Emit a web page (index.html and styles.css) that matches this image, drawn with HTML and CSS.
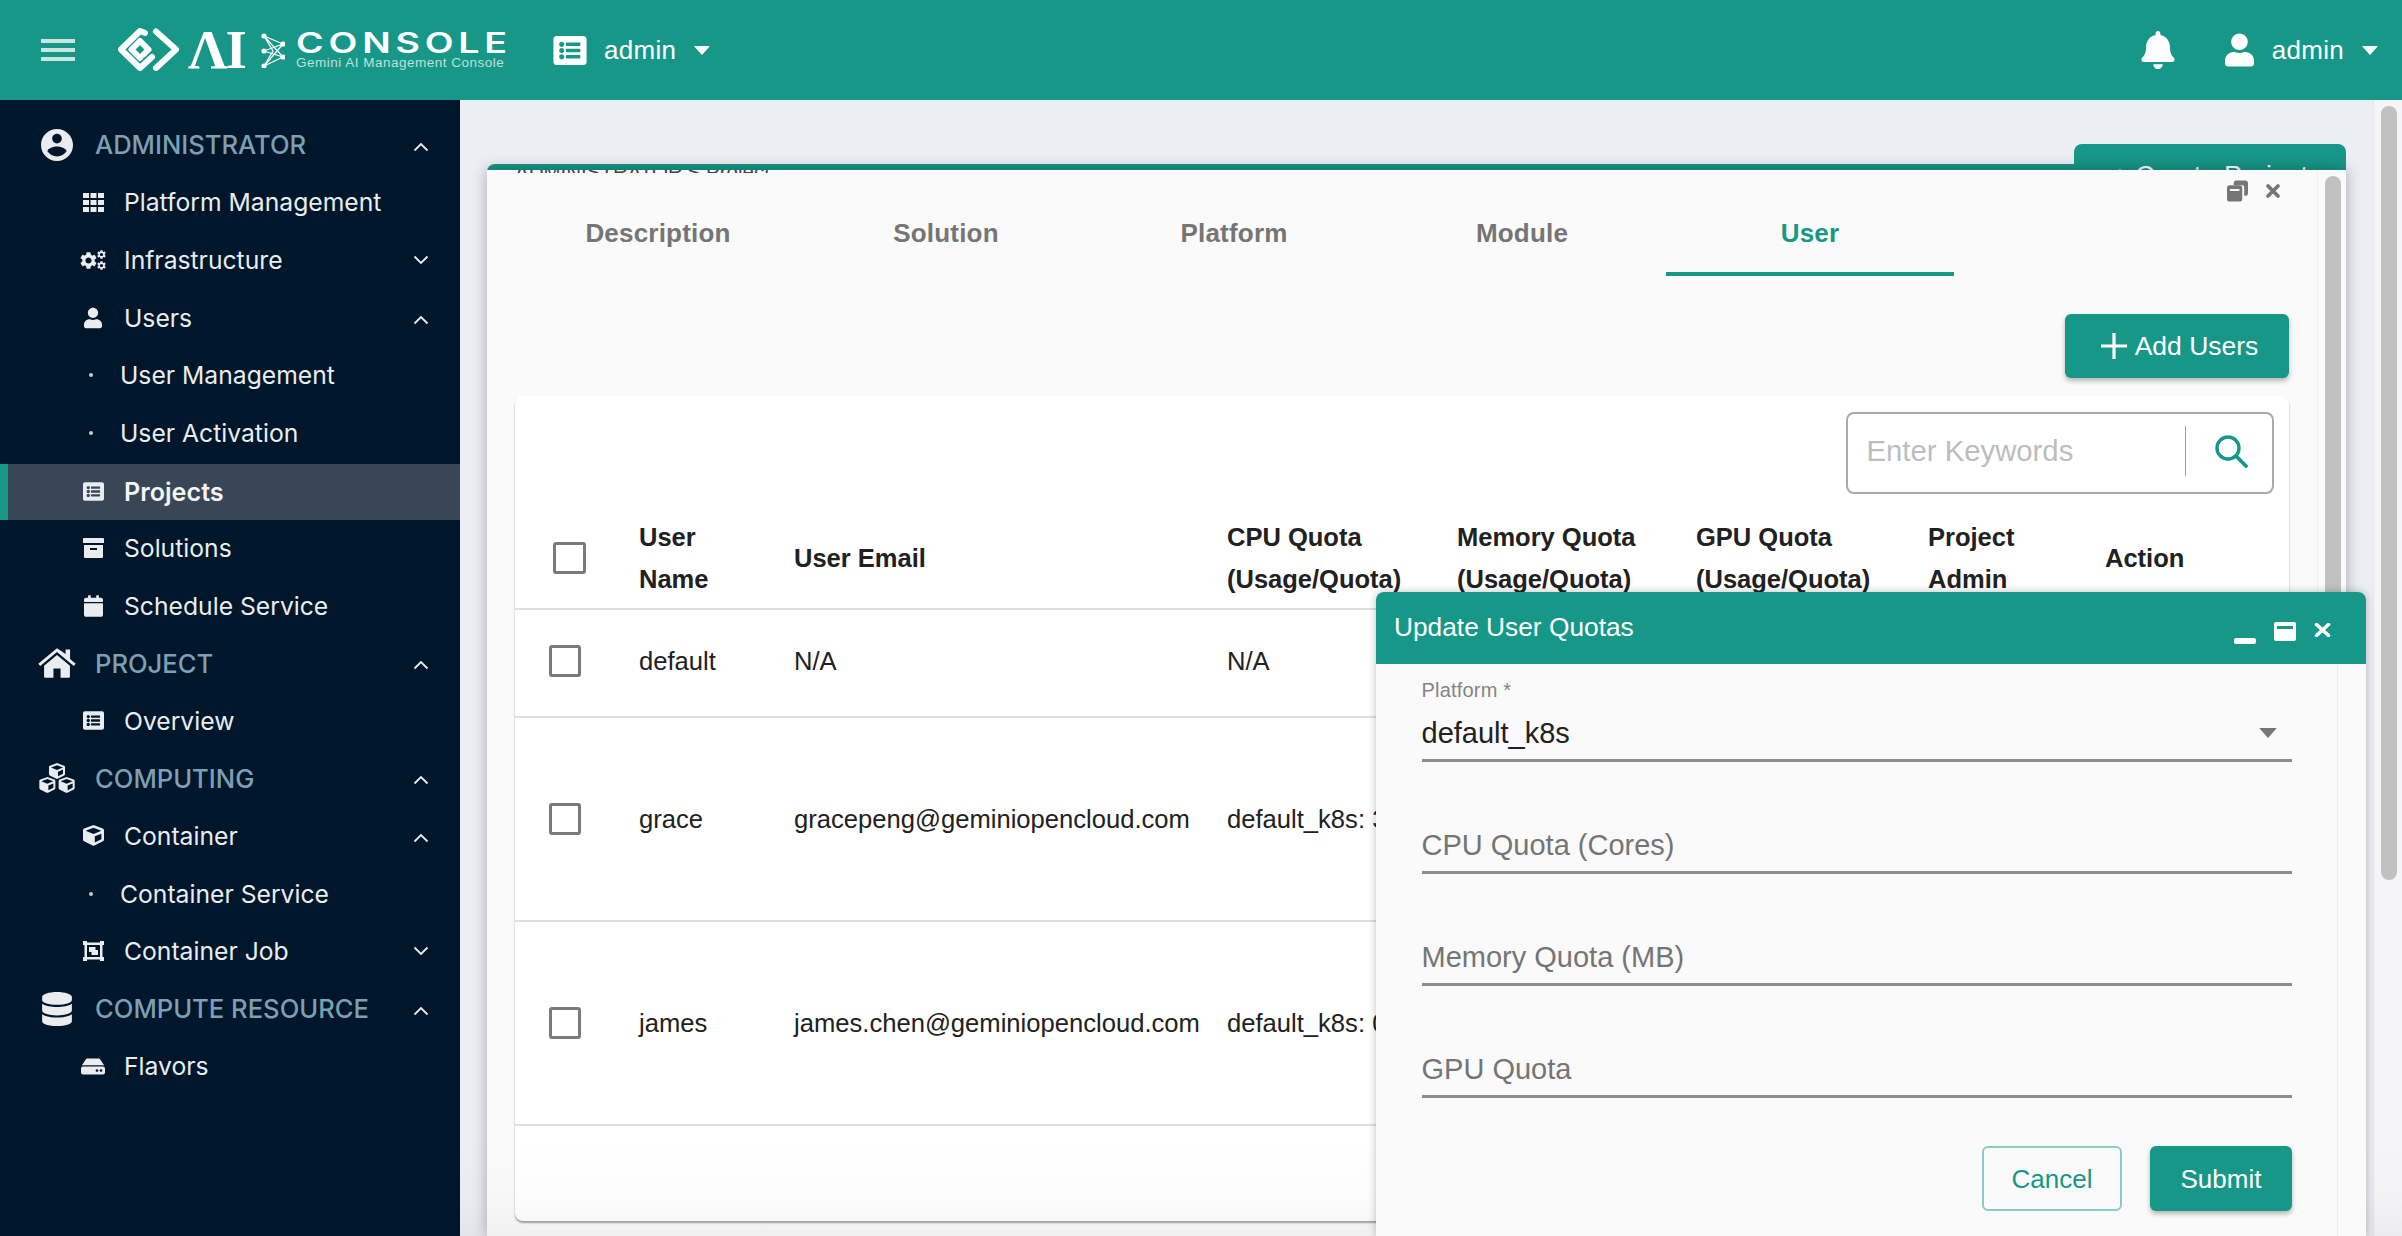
FILE: index.html
```html
<!DOCTYPE html>
<html lang="en">
<head>
<meta charset="utf-8">
<title>AI Console - Project Users</title>
<link rel="stylesheet" href="styles.css">
</head>
<body>
<svg class="defs" aria-hidden="true">
  <symbol id="i-list" viewBox="0 32 512 448"><path d="M464 480H48c-26.51 0-48-21.49-48-48V80c0-26.51 21.49-48 48-48h416c26.51 0 48 21.49 48 48v352c0 26.51-21.49 48-48 48zM128 120c-22.091 0-40 17.909-40 40s17.909 40 40 40 40-17.909 40-40-17.909-40-40-40zm0 96c-22.091 0-40 17.909-40 40s17.909 40 40 40 40-17.909 40-40-17.909-40-40-40zm0 96c-22.091 0-40 17.909-40 40s17.909 40 40 40 40-17.909 40-40-17.909-40-40-40zm288-136v-32c0-6.627-5.373-12-12-12H204c-6.627 0-12 5.373-12 12v32c0 6.627 5.373 12 12 12h200c6.627 0 12-5.373 12-12zm0 96v-32c0-6.627-5.373-12-12-12H204c-6.627 0-12 5.373-12 12v32c0 6.627 5.373 12 12 12h200c6.627 0 12-5.373 12-12zm0 96v-32c0-6.627-5.373-12-12-12H204c-6.627 0-12 5.373-12 12v32c0 6.627 5.373 12 12 12h200c6.627 0 12-5.373 12-12z"/></symbol>
  <symbol id="i-user" viewBox="0 0 448 512"><path d="M224 256c70.7 0 128-57.3 128-128S294.7 0 224 0 96 57.3 96 128s57.3 128 128 128zm89.6 32h-16.7c-22.2 10.2-46.9 16-72.9 16s-50.6-5.8-72.9-16h-16.7C60.2 288 0 348.2 0 422.4V464c0 26.5 21.5 48 48 48h352c26.5 0 48-21.5 48-48v-41.6c0-74.2-60.2-134.4-134.4-134.4z"/></symbol>
  <symbol id="i-bell" viewBox="0 0 448 512"><path d="M224 512c35.32 0 63.97-28.65 63.97-64H160.03c0 35.35 28.65 64 63.97 64zm215.39-149.71c-19.32-20.76-55.47-51.99-55.47-154.29 0-77.7-54.48-139.9-127.94-155.16V32c0-17.67-14.32-32-31.98-32s-31.98 14.33-31.98 32v20.84C118.56 68.1 64.08 130.3 64.08 208c0 102.3-36.15 133.53-55.47 154.29-6 6.45-8.66 14.16-8.61 21.71.11 16.4 12.98 32 32.1 32h383.8c19.12 0 32-15.6 32.1-32 .05-7.55-2.61-15.27-8.61-21.71z"/></symbol>
  <symbol id="i-account" viewBox="2 2 20 20"><path d="M12 2C6.48 2 2 6.48 2 12s4.48 10 10 10 10-4.48 10-10S17.52 2 12 2zm0 3c1.66 0 3 1.34 3 3s-1.34 3-3 3-3-1.34-3-3 1.34-3 3-3zm0 14.2c-2.5 0-4.71-1.28-6-3.22.03-1.99 4-3.08 6-3.08 1.99 0 5.97 1.09 6 3.08-1.29 1.94-3.5 3.22-6 3.22z"/></symbol>
  <symbol id="i-gear" viewBox="2 2 20 20"><path d="M19.14 12.94c.04-.3.06-.61.06-.94 0-.32-.02-.64-.07-.94l2.03-1.58c.18-.14.23-.41.12-.61l-1.92-3.32c-.12-.22-.37-.29-.59-.22l-2.39.96c-.5-.38-1.03-.7-1.62-.94l-.36-2.54c-.04-.24-.24-.41-.48-.41h-3.84c-.24 0-.43.17-.47.41l-.36 2.54c-.59.24-1.13.57-1.62.94l-2.39-.96c-.22-.08-.47 0-.59.22L2.74 8.87c-.12.21-.08.47.12.61l2.03 1.58c-.05.3-.09.63-.09.94s.02.64.07.94l-2.03 1.58c-.18.14-.23.41-.12.61l1.92 3.32c.12.22.37.29.59.22l2.39-.96c.5.38 1.03.7 1.62.94l.36 2.54c.05.24.24.41.48.41h3.84c.24 0 .44-.17.47-.41l.36-2.54c.59-.24 1.13-.56 1.62-.94l2.39.96c.22.08.47 0 .59-.22l1.92-3.32c.12-.22.07-.47-.12-.61l-2.01-1.58zM12 15.6c-1.98 0-3.6-1.62-3.6-3.6s1.62-3.6 3.6-3.6 3.6 1.62 3.6 3.6-1.62 3.6-3.6 3.6z"/></symbol>
  <symbol id="i-cube" viewBox="0 0 512 512"><path d="M239.1 6.3l-208 78c-18.7 7-31.1 25-31.1 45v225.1c0 18.2 10.3 34.8 26.5 42.9l208 104c13.5 6.8 29.4 6.8 42.9 0l208-104c16.3-8.1 26.5-24.8 26.5-42.9V129.3c0-20-12.4-37.9-31.1-44.9l-208-78C262 2.2 250 2.2 239.1 6.3zM256 68.4l192 72v1.1l-192 78-192-78v-1.1l192-72zm32 356V275.5l160-65v133.9l-160 80z"/></symbol>
  <symbol id="i-up" viewBox="0 0 16 10"><path d="M1.5 8.5 8 2l6.5 6.5" fill="none" stroke="currentColor" stroke-width="1.8"/></symbol>
  <symbol id="i-down" viewBox="0 0 16 10"><path d="M1.5 1.5 8 8l6.5-6.5" fill="none" stroke="currentColor" stroke-width="1.8"/></symbol>
  <symbol id="i-caret" viewBox="0 0 14 8"><path d="M0 .5Q0 0 .5 0h13q.5 0 .2.5L7 8 .2.500z"/></symbol>
</svg>

<header class="topbar">
  <button class="burger" aria-label="Menu"><span></span><span></span><span></span></button>
  <div class="logo">
    <svg class="logo-mark" viewBox="0 0 61 43" aria-hidden="true"><g fill="none" stroke="#fff" stroke-width="6" stroke-linejoin="round" stroke-linecap="round"><path d="M27 5 22 3 3 21.5 22 40l12-11"/><path d="M22 30 13.500 21.500 22 13l8.500 8.500-5 5"/><path d="M38 3.500 58 21.500 38 40"/></g></svg>
    <span class="logo-ai">ΛI</span>
    <svg class="logo-net" viewBox="0 0 24 35" aria-hidden="true"><g stroke="#fff" stroke-width="1.2" fill="none"><path d="M3 3 22 11M3 3 22 24M3 18 22 11M3 18 22 24M3 33 22 24M3 33 22 11M3 3 12 18 3 33"/></g><g fill="#fff"><circle cx="3" cy="3" r="2.600"/><circle cx="22" cy="11" r="2.600"/><circle cx="3" cy="18" r="2.600"/><circle cx="22" cy="24" r="2.600"/><circle cx="3" cy="33" r="2.600"/></g></svg>
    <div class="logo-words">
      <span class="logo-console">CONSOLE</span>
      <span class="logo-sub">Gemini AI Management Console</span>
    </div>
  </div>
  <div class="tenant">
    <svg class="tenant-icon"><use href="#i-list"/></svg>
    <span class="bar-label">admin</span>
    <svg class="caret"><use href="#i-caret"/></svg>
  </div>
  <div class="bar-right">
    <svg class="bell"><use href="#i-bell"/></svg>
    <svg class="bar-user"><use href="#i-user"/></svg>
    <span class="bar-label">admin</span>
    <svg class="caret"><use href="#i-caret"/></svg>
  </div>
</header>

<div class="layout">
  <nav class="sidebar">
    <a class="row lv1"><svg class="ic ic-account"><use href="#i-account"/></svg><span class="label">ADMINISTRATOR</span><svg class="chev up"><use href="#i-up"/></svg></a>
    <a class="row lv2"><span class="slot"><svg class="ic ic-grid" viewBox="0 0 21 19"><path d="M0 0h6v5H0zM7.500 0h6v5h-6zM15 0h6v5h-6zM0 7h6v5H0zM7.500 7h6v5h-6zM15 7h6v5h-6zM0 14h6v5H0zM7.500 14h6v5h-6zM15 14h6v5h-6z"/></svg></span><span class="label">Platform Management</span></a>
    <a class="row lv2"><span class="slot"><svg class="ic ic-cogs" viewBox="0 0 26 20"><use href="#i-gear" x="0" y="2" width="17" height="17"/><use href="#i-gear" x="17" y="0" width="9" height="9"/><use href="#i-gear" x="17" y="11" width="9" height="9"/></svg></span><span class="label">Infrastructure</span><svg class="chev"><use href="#i-down"/></svg></a>
    <a class="row lv2"><span class="slot"><svg class="ic ic-person"><use href="#i-user"/></svg></span><span class="label">Users</span><svg class="chev up"><use href="#i-up"/></svg></a>
    <a class="row lv3"><i class="dot"></i><span class="label">User Management</span></a>
    <a class="row lv3"><i class="dot"></i><span class="label">User Activation</span></a>
    <a class="row lv2 active"><span class="slot"><svg class="ic ic-list"><use href="#i-list"/></svg></span><span class="label">Projects</span></a>
    <a class="row lv2"><span class="slot"><svg class="ic ic-archive" viewBox="0 0 21 20"><path d="M0 1q0-1 1-1h19q1 0 1 1v4H0zM1 7h19v12q0 1-1 1H2q-1 0-1-1zm6 3v2h7v-2z" fill-rule="evenodd"/></svg></span><span class="label">Solutions</span></a>
    <a class="row lv2"><span class="slot"><svg class="ic ic-cal" viewBox="0 0 448 512"><path d="M12 192h424c6.600 0 12 5.400 12 12v260c0 26.500-21.500 48-48 48H48c-26.500 0-48-21.500-48-48V204c0-6.600 5.400-12 12-12zm436-44v-36c0-26.500-21.500-48-48-48h-48V12c0-6.600-5.400-12-12-12h-40c-6.600 0-12 5.400-12 12v52H160V12c0-6.600-5.400-12-12-12h-40c-6.600 0-12 5.400-12 12v52H48C21.500 64 0 85.500 0 112v36c0 6.600 5.400 12 12 12h424c6.600 0 12-5.400 12-12z"/></svg></span><span class="label">Schedule Service</span></a>
    <a class="row lv1"><svg class="ic ic-home" viewBox="0 0 576 450"><path d="M288 0 4 238l30 34L288 60l254 212 30-34-86-72V22h-68v68zM92 268v162q0 20 20 20h122V310h108v140h122q20 0 20-20V268L288 104z"/></svg><span class="label">PROJECT</span><svg class="chev up"><use href="#i-up"/></svg></a>
    <a class="row lv2"><span class="slot"><svg class="ic ic-list"><use href="#i-list"/></svg></span><span class="label">Overview</span></a>
    <a class="row lv1"><svg class="ic ic-cubes" viewBox="0 0 34 28"><use href="#i-cube" x="9" y="0" width="16" height="15"/><use href="#i-cube" x="0" y="13" width="16" height="15"/><use href="#i-cube" x="18" y="13" width="16" height="15"/></svg><span class="label">COMPUTING</span><svg class="chev up"><use href="#i-up"/></svg></a>
    <a class="row lv2"><span class="slot"><svg class="ic ic-cube"><use href="#i-cube"/></svg></span><span class="label">Container</span><svg class="chev up"><use href="#i-up"/></svg></a>
    <a class="row lv3"><i class="dot"></i><span class="label">Container Service</span></a>
    <a class="row lv2"><span class="slot"><svg class="ic ic-job" viewBox="0 0 21 20"><path fill-rule="evenodd" d="M0 0h4v1.500h13V0h4v4h-1.500v12H21v4h-4v-1.500H4V20H0v-4h1.500V4H0zM4 4v12h13V4zM6 6h6.500v3H15v5H8.500v-3H6z"/></svg></span><span class="label">Container Job</span><svg class="chev"><use href="#i-down"/></svg></a>
    <a class="row lv1"><svg class="ic ic-db" viewBox="0 0 448 512"><path d="M448 73.143v45.714C448 159.143 347.667 192 224 192S0 159.143 0 118.857V73.143C0 32.857 100.333 0 224 0s224 32.857 224 73.143zM448 176v102.857C448 319.143 347.667 352 224 352S0 319.143 0 278.857V176c48.125 33.143 136.208 48.572 224 48.572S399.874 209.143 448 176zm0 160v102.857C448 479.143 347.667 512 224 512S0 479.143 0 438.857V336c48.125 33.143 136.208 48.572 224 48.572S399.874 369.143 448 336z"/></svg><span class="label">COMPUTE RESOURCE</span><svg class="chev up"><use href="#i-up"/></svg></a>
    <a class="row lv2"><span class="slot"><svg class="ic ic-hdd" viewBox="0 64 576 384"><path d="M576 304v96c0 26.510-21.490 48-48 48H48c-26.510 0-48-21.490-48-48v-96c0-26.510 21.490-48 48-48h480c26.510 0 48 21.490 48 48zm-48-80a79.557 79.557 0 0 1 30.777 6.165L462.250 85.374A48.003 48.003 0 0 0 422.311 64H153.689a48 48 0 0 0-39.938 21.374L17.223 230.165A79.557 79.557 0 0 1 48 224h480zm-48 96c-17.673 0-32 14.327-32 32s14.327 32 32 32 32-14.327 32-32-14.327-32-32-32zm-96 0c-17.673 0-32 14.327-32 32s14.327 32 32 32 32-14.327 32-32-14.327-32-32-32z"/></svg></span><span class="label">Flavors</span></a>
  </nav>

  <main class="content">
    <div class="stage">
      <div class="page-head"><button class="create-btn">+ Create Project</button></div>
      <div class="page-card"></div>
    </div>
    <div class="gutter"><div class="thumb main-thumb"></div></div>

    <section class="modal">
      <div class="modal-body">
        <div class="peek">ADMINISTRATOR'S Project</div>
        <div class="win-ctl">
          <svg class="ctl-restore" viewBox="0 0 22 22"><path d="M7 3q0-3 3-3h9q3 0 3 3v10q0 3-3 3h-1V7q0-2-2-2H7z"/><path fill-rule="evenodd" d="M0 8q0-3 3-3h10q3 0 3 3v11q0 3-3 3H3q-3 0-3-3zm3 1v2h10V9z"/></svg>
          <svg class="ctl-x" viewBox="0 0 14 14"><path d="M2 2l10 10M12 2 2 12" stroke="#757575" stroke-width="3.600" fill="none" stroke-linecap="round"/></svg>
        </div>
        <div class="tabs">
          <div class="tab">Description</div>
          <div class="tab">Solution</div>
          <div class="tab">Platform</div>
          <div class="tab">Module</div>
          <div class="tab tab-on">User</div>
        </div>
        <div class="toolbar">
          <button class="add-btn"><svg class="plus" viewBox="0 0 26 26"><path d="M13 0v26M0 13h26" stroke="#fff" stroke-width="3.200"/></svg>Add Users</button>
        </div>
        <div class="card">
          <div class="search-row">
            <div class="search">
              <span class="search-ph">Enter Keywords</span>
              <i class="search-sep"></i>
              <svg class="search-ic" viewBox="0 0 33 33"><circle cx="13" cy="13" r="11" fill="none" stroke="#179788" stroke-width="3.400"/><path d="M21 21l10 10" stroke="#179788" stroke-width="3.800" stroke-linecap="round"/></svg>
            </div>
          </div>
          <table class="users">
            <colgroup><col class="c-check"><col class="c-name"><col class="c-mail"><col class="c-cpu"><col class="c-mem"><col class="c-gpu"><col class="c-admin"><col class="c-act"></colgroup>
            <thead>
              <tr>
                <th><i class="box box-head"></i></th>
                <th>User<br>Name</th>
                <th>User Email</th>
                <th>CPU Quota<br>(Usage/Quota)</th>
                <th>Memory Quota<br>(Usage/Quota)</th>
                <th>GPU Quota<br>(Usage/Quota)</th>
                <th>Project<br>Admin</th>
                <th>Action</th>
              </tr>
            </thead>
            <tbody>
              <tr class="r-short">
                <td><i class="box"></i></td><td>default</td><td>N/A</td><td>N/A</td><td>N/A</td><td>N/A</td><td></td><td></td>
              </tr>
              <tr class="r-tall">
                <td><i class="box"></i></td><td>grace</td><td>gracepeng@geminiopencloud.com</td><td>default_k8s: 3/10</td><td></td><td></td><td></td><td></td>
              </tr>
              <tr class="r-tall">
                <td><i class="box"></i></td><td>james</td><td>james.chen@geminiopencloud.com</td><td>default_k8s: 0/10</td><td></td><td></td><td></td><td></td>
              </tr>
            </tbody>
          </table>
        </div>
      </div>
      <div class="modal-track"><div class="thumb modal-thumb"></div></div>
    </section>

    <div class="shade"></div>

    <section class="dialog">
      <header class="dialog-head">
        <span class="dialog-title">Update User Quotas</span>
        <svg class="d-min" viewBox="0 0 22 6"><rect width="22" height="6" rx="2" fill="#fff"/></svg>
        <svg class="d-max" viewBox="0 0 22 19"><path fill="#fff" fill-rule="evenodd" d="M2 0h18q2 0 2 2v15q0 2-2 2H2q-2 0-2-2V2q0-2 2-2zm1 4v3h16V4z"/></svg>
        <svg class="d-x" viewBox="0 0 17 14"><path d="M2.500 1.500l12 11M14.500 1.500l-12 11" stroke="#fff" stroke-width="3.600" stroke-linecap="round"/></svg>
      </header>
      <div class="dialog-body">
        <div class="form">
          <div class="field field-select">
            <label class="field-label">Platform *</label>
            <div class="field-value"><span>default_k8s</span><svg class="select-caret" viewBox="0 0 14 8"><path d="M0 0h14L7 8z"/></svg></div>
          </div>
          <div class="field"><span class="ph">CPU Quota (Cores)</span></div>
          <div class="field"><span class="ph">Memory Quota (MB)</span></div>
          <div class="field"><span class="ph">GPU Quota</span></div>
          <div class="actions">
            <button class="btn-cancel">Cancel</button>
            <button class="btn-submit">Submit</button>
          </div>
        </div>
        <div class="dialog-track"></div>
      </div>
    </section>
  </main>
</div>
</body>
</html>
```
FILE: styles.css
```css
* { box-sizing: border-box; }
html, body { margin: 0; height: 1236px; overflow: hidden; }
body { font-family: "Liberation Sans", Arial, sans-serif; font-size: 26px; color: #212121; background: #eceef3; display: flex; flex-direction: column; }
.defs { position: absolute; width: 0; height: 0; }
button { font-family: inherit; border: 0; padding: 0; background: none; }

/* top bar */
.topbar { height: 100px; flex: none; background: #179788; display: flex; align-items: center; color: #fff; }
.burger { width: 34px; margin-left: 41px; display: flex; flex-direction: column; gap: 5px; }
.burger span { height: 4px; background: #c9e6e2; display: block; }
.logo { margin-left: 43px; display: flex; align-items: center; height: 100px; }
.logo-mark { width: 61px; height: 43px; margin-top: -1px; }
.logo-ai { font-family: "Liberation Serif", serif; font-weight: 700; font-size: 55px; line-height: 40px; width: 60px; margin-left: 9px; letter-spacing: -2px; white-space: nowrap; }
.logo-net { width: 24px; height: 35px; margin-left: 13px; }
.logo-words { margin-left: 11px; width: 212px; display: flex; flex-direction: column; align-items: flex-start; white-space: nowrap; }
.logo-console { font-family: Inter, sans-serif; font-weight: 600; font-size: 28px; line-height: 24px; letter-spacing: 3.6px; transform: scaleX(1.34); transform-origin: left center; }
.logo-sub { font-size: 13.5px; line-height: 15px; letter-spacing: .5px; color: rgba(255,255,255,.72); }
.tenant { margin-left: 45px; display: flex; align-items: center; }
.tenant-icon { width: 34px; height: 29px; fill: #fff; margin-right: 17px; }
.bar-label { font-size: 26px; letter-spacing: .3px; }
.caret { width: 16px; height: 9px; fill: #fff; margin-left: 18px; }
.bar-right { margin-left: auto; margin-right: 24px; display: flex; align-items: center; }
.bell { width: 34px; height: 38px; fill: #fff; margin-right: 50px; }
.bar-user { width: 29px; height: 34px; fill: #fff; margin-right: 18px; }

/* sidebar */
.layout { flex: 1; display: flex; min-height: 0; }
.sidebar { width: 460px; flex: none; background: #00162b; padding-top: 16px; }
.row { height: 57.6px; display: flex; align-items: center; color: #e9edf0; font-family: Inter, sans-serif; font-size: 24.7px; white-space: nowrap; }
.ic { fill: #e9edf0; display: block; }
.chev { width: 16px; height: 10px; margin-left: auto; margin-right: 31px; color: #e9edf0; }
.chev.up { margin-top: 4px; }
.lv1 { padding-left: 38px; }
.lv1 .ic { width: 38px; height: 30px; margin-right: 19px; }
.lv1 .label { color: #7d9fb2; font-weight: 500; font-size: 25.6px; }
.lv1 .ic-account { width: 34px; height: 32px; margin: 0 21px 0 2px; }
.lv1 .ic-db { width: 30px; height: 34px; margin: 0 23px 0 4px; }
.lv2 { padding-left: 78px; }
.slot { width: 30px; margin-right: 16px; display: flex; justify-content: center; }
.ic-grid { width: 21px; height: 19px; }
.ic-cogs { width: 26px; height: 20px; }
.ic-person { width: 18px; height: 22px; }
.ic-list { width: 21px; height: 19px; }
.ic-archive { width: 21px; height: 20px; }
.ic-cal { width: 19px; height: 22px; }
.ic-cube { width: 21px; height: 21px; }
.ic-job { width: 21px; height: 20px; }
.ic-hdd { width: 24px; height: 17px; }
.lv3 { padding-left: 89px; }
.dot { width: 4px; height: 4px; border-radius: 50%; background: #c3ccd3; margin-right: 27px; }
.active { background: #384655; border-left: 8px solid #179788; padding-left: 70px; height: 56px; margin: 2.2px 0 -.6px; color: #f3f5f6; }
.active .label { font-weight: 600; font-size: 25.2px; }

/* page behind the window */
.content { flex: 1; position: relative; display: flex; min-width: 0; overflow: hidden; }
.stage { flex: 1; padding: 0 27px; min-width: 0; }
.page-head { height: 64px; display: flex; justify-content: flex-end; }
.create-btn { margin-top: 44px; width: 272px; height: 60px; background: #179788; color: #fff; border-radius: 8px; font-size: 27px; line-height: 30px; padding-top: 17px; display: flex; justify-content: center; align-items: flex-start; align-self: flex-start; position: relative; z-index: 1; }
.page-card { height: 40px; background: #179788; border-radius: 8px 8px 0 0; }
.gutter { width: 29px; flex: none; background: #f5f5f7; padding: 6px 6px 0 7px; border-left: 1px solid #e4e6ea; }
.thumb { background: #c1c1c1; border-radius: 8px; width: 16px; }
.main-thumb { height: 774px; }

/* project window */
.modal { position: absolute; left: 27px; top: 70px; width: 1859px; bottom: 0; background: #fafafa; box-shadow: 0 0 14px rgba(0,0,0,.3); display: flex; z-index: 2; }
.modal-body { flex: 1; min-width: 0; padding: 0 28.5px 0 28px; }
.modal-track { width: 29px; flex: none; padding: 6px 0 0 7px; border-left: 1px solid #efefef; }
.modal-thumb { height: 500px; }
.peek { height: 3px; line-height: 3px; overflow: hidden; font-size: 20.5px; color: #444; white-space: nowrap; }
.win-ctl { height: 30px; display: flex; align-items: flex-start; justify-content: flex-end; gap: 18px; padding: 7px 9px 0 0; }
.ctl-restore { width: 21px; height: 22px; fill: #757575; }
.ctl-x { width: 14px; height: 14px; margin-top: 4px; }
.tabs { display: flex; margin-left: -1px; }
.tab { width: 288px; text-align: center; font-weight: 700; font-size: 26px; letter-spacing: .2px; line-height: 32px; color: #757575; padding: 14px 0 23px; border-bottom: 4px solid transparent; }
.tab-on { color: #179788; border-bottom-color: #179788; }
.toolbar { display: flex; justify-content: flex-end; margin-top: 38px; }
.add-btn { width: 224px; height: 64px; background: #179788; color: #fff; border-radius: 6px; font-size: 26.5px; display: flex; align-items: center; justify-content: center; gap: 8px; padding-left: 6px; box-shadow: 0 3px 5px rgba(0,0,0,.28); }
.plus { width: 26px; height: 26px; }
.card { margin-top: 18px; height: 825px; background: #fff; border-radius: 8px; box-shadow: 0 2px 2px rgba(0,0,0,.35); }
.search-row { height: 112px; padding: 16px 15px 0 0; display: flex; justify-content: flex-end; align-items: flex-start; }
.search { width: 428px; height: 82px; border: 2px solid #aaa; border-radius: 8px; display: flex; align-items: center; padding: 0 0 4px 19px; }
.search-ph { font-size: 29.3px; color: #bdbdbd; width: 318px; white-space: nowrap; }
.search-sep { width: 1.500px; height: 50px; background: #9e9e9e; }
.search-ic { width: 33px; height: 33px; margin-left: 29px; }

/* table */
.users { width: 100%; table-layout: fixed; border-collapse: collapse; }
.c-check { width: 124px; } .c-name { width: 155px; } .c-mail { width: 433px; } .c-cpu { width: 230px; }
.c-mem { width: 239px; } .c-gpu { width: 232px; } .c-admin { width: 177px; } .c-act { width: 184px; }
.users th { height: 101px; padding: 0; text-align: left; font-size: 25.5px; line-height: 42.5px; font-weight: 700; color: #212121; border-bottom: 2px solid #e0e0e0; vertical-align: middle; white-space: nowrap; }
.users td { padding: 0; font-size: 25.6px; color: #212121; border-bottom: 2px solid #e0e0e0; vertical-align: middle; white-space: nowrap; }
.r-short td { height: 108px; padding-bottom: 4px; }
.r-tall td { height: 204px; }
.box { display: block; width: 32px; height: 32px; border: 3px solid #7a7a7a; border-radius: 3px; margin-left: 34px; }
.box-head { margin-left: 38px; width: 33px; }

/* dim at the bottom of the view */
.shade { position: absolute; left: 0; right: 0; bottom: 0; height: 100px; background: linear-gradient(rgba(0,0,0,0), rgba(0,0,0,.012) 65%, rgba(0,0,0,.04)); pointer-events: none; z-index: 3; }

/* quota dialog */
.dialog { position: absolute; left: 916px; top: 492px; width: 990px; bottom: 0; display: flex; flex-direction: column; background: #fafafa; border-radius: 8px 8px 0 0; box-shadow: 0 0 8px rgba(0,0,0,.25); z-index: 4; }
.dialog-head { height: 72px; flex: none; background: #179788; color: #fff; border-radius: 8px 8px 0 0; display: flex; align-items: center; padding: 0 35px 2px 18px; }
.dialog-title { font-size: 26.3px; margin-right: auto; }
.d-min { width: 22px; height: 6px; margin-top: 27px; }
.d-max { width: 22px; height: 19px; margin-left: 18px; margin-top: 9px; }
.d-x { width: 17px; height: 14px; margin-left: 18px; margin-top: 5px; }
.dialog-body { flex: 1; display: flex; min-height: 0; }
.form { flex: 1; padding: 0 45px 0 45.5px; min-width: 0; }
.dialog-track { width: 29px; flex: none; border-left: 1px solid #ececec; }
.field { height: 112px; border-bottom: 3px solid #8c8c8c; display: flex; align-items: flex-end; padding-bottom: 6px; }
.field-select { height: 97.5px; display: block; padding: 14px 0 0; }
.field-label { display: block; font-size: 20px; line-height: 24px; color: #858585; letter-spacing: .2px; }
.field-value { display: flex; align-items: center; justify-content: space-between; font-size: 29px; line-height: 46px; margin-top: 8px; padding-right: 15px; color: #212121; }
.select-caret { width: 18px; height: 10px; fill: #757575; }
.ph { font-size: 29px; line-height: 40px; color: #757575; }
.actions { display: flex; justify-content: flex-end; gap: 28px; margin-top: 48.5px; }
.btn-cancel, .btn-submit { height: 65px; font-size: 26px; border-radius: 6px; padding-top: 2px; }
.btn-cancel { width: 140px; border: 2px solid #8accc4; color: #179788; background: transparent; }
.btn-submit { width: 142px; background: #179788; color: #fff; box-shadow: 0 3px 5px rgba(0,0,0,.28); }
```
